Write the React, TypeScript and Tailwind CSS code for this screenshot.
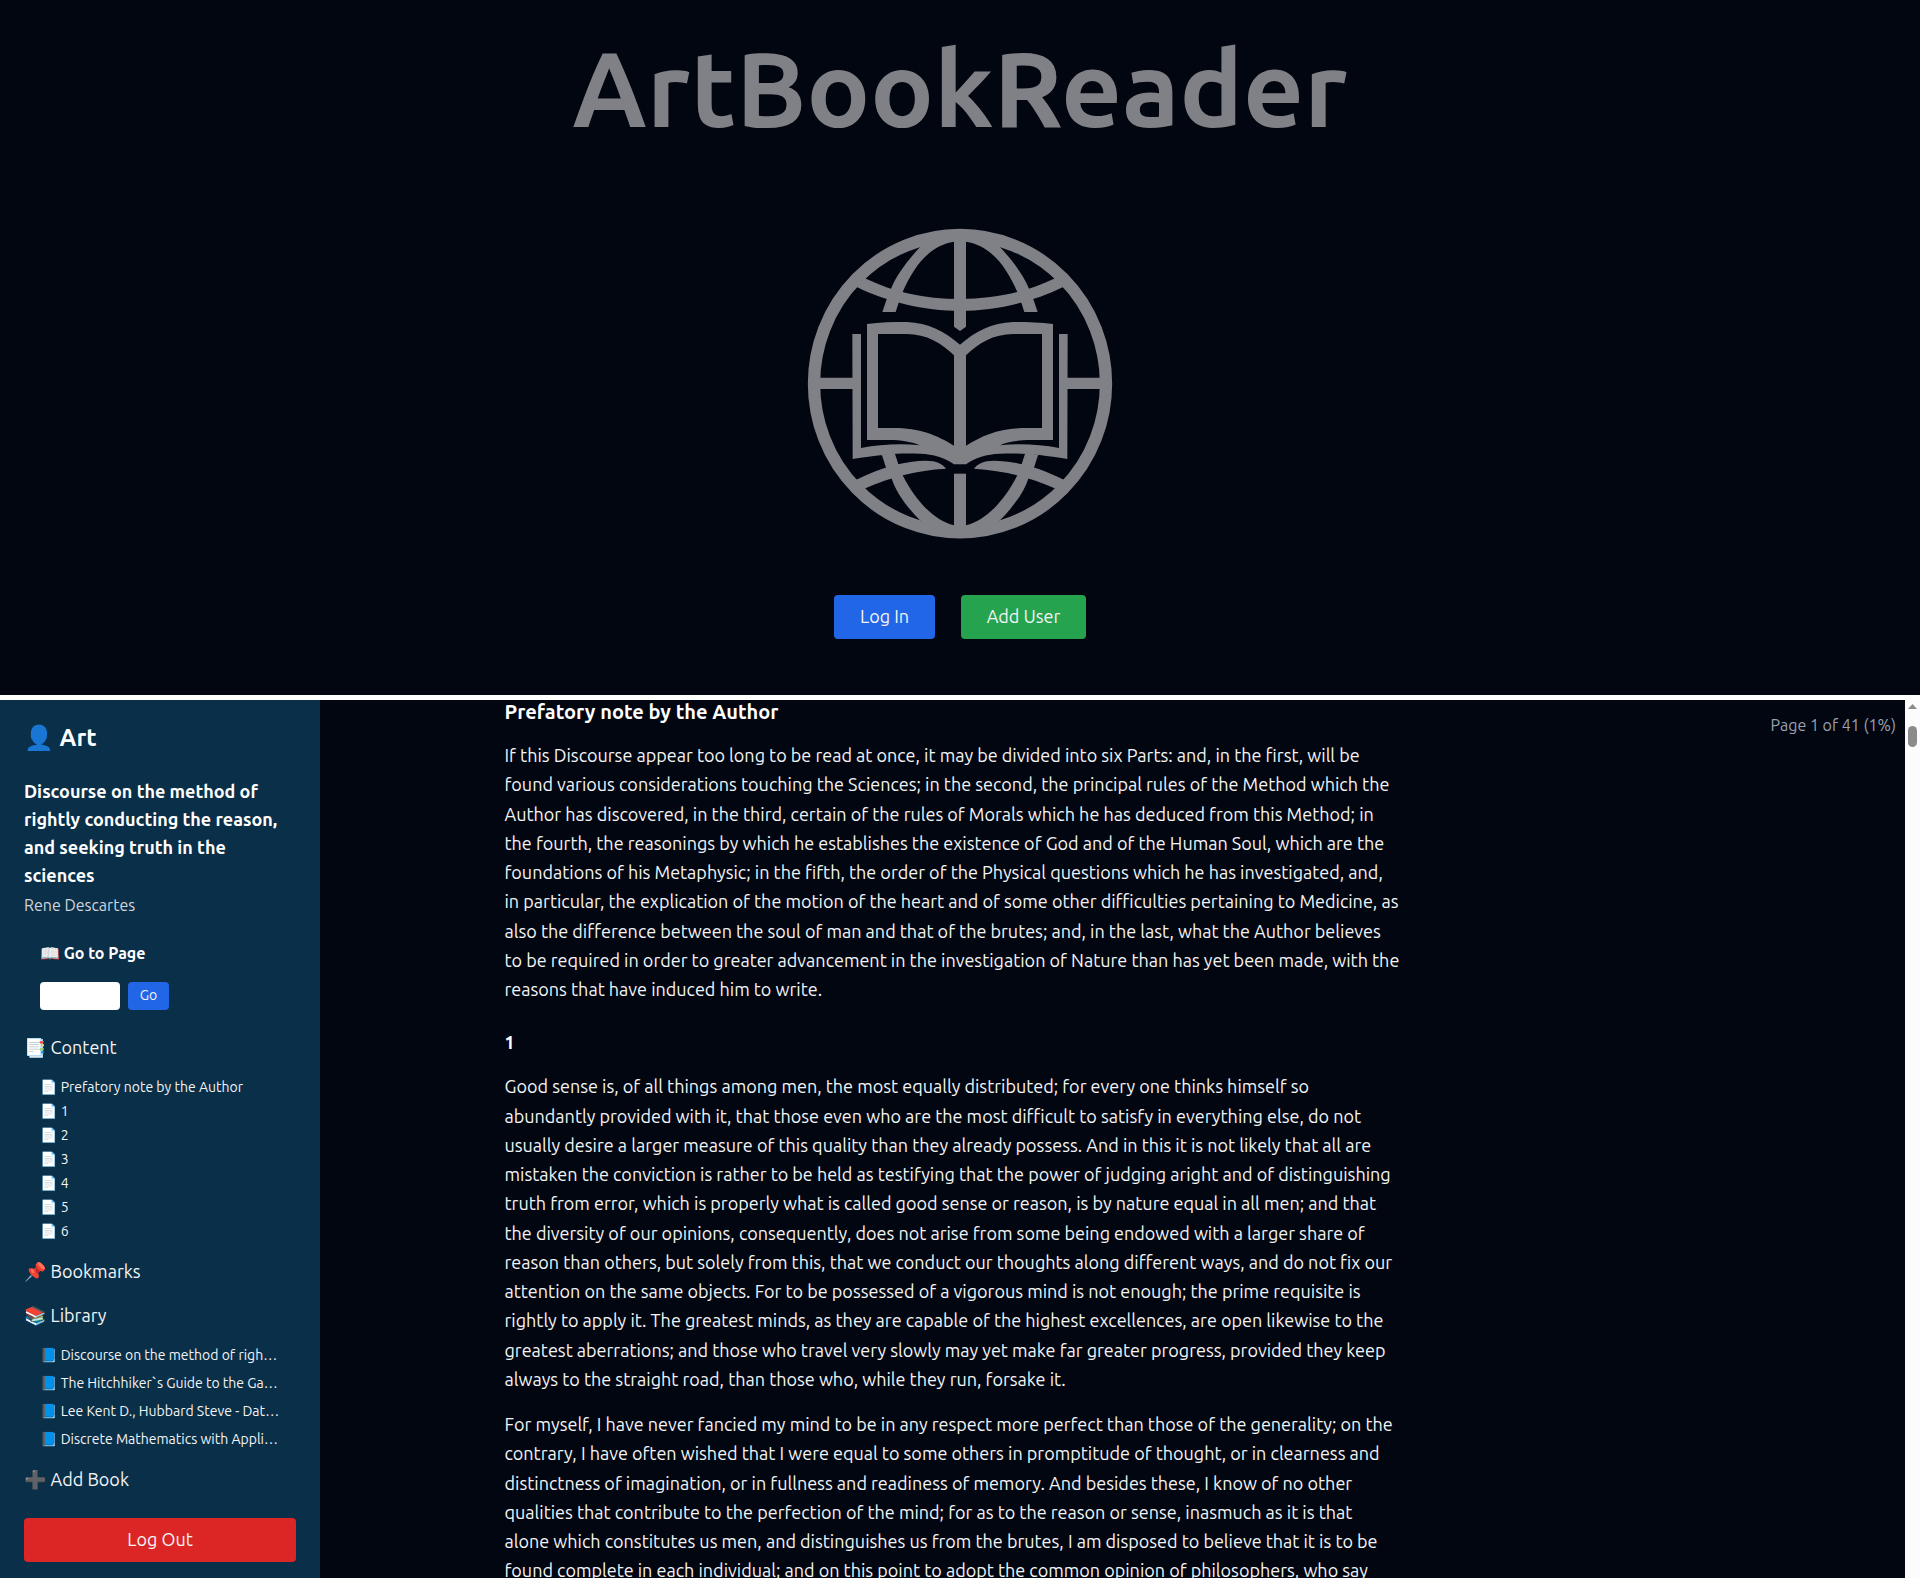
import React from "react";

const preface = [
  "If this Discourse appear too long to be read at once, it may be divided into six Parts: and, in the first, will be",
  "found various considerations touching the Sciences; in the second, the principal rules of the Method which the",
  "Author has discovered, in the third, certain of the rules of Morals which he has deduced from this Method; in",
  "the fourth, the reasonings by which he establishes the existence of God and of the Human Soul, which are the",
  "foundations of his Metaphysic; in the fifth, the order of the Physical questions which he has investigated, and,",
  "in particular, the explication of the motion of the heart and of some other difficulties pertaining to Medicine, as",
  "also the difference between the soul of man and that of the brutes; and, in the last, what the Author believes",
  "to be required in order to greater advancement in the investigation of Nature than has yet been made, with the",
  "reasons that have induced him to write.",
];

const goodSense = [
  "Good sense is, of all things among men, the most equally distributed; for every one thinks himself so",
  "abundantly provided with it, that those even who are the most difficult to satisfy in everything else, do not",
  "usually desire a larger measure of this quality than they already possess. And in this it is not likely that all are",
  "mistaken the conviction is rather to be held as testifying that the power of judging aright and of distinguishing",
  "truth from error, which is properly what is called good sense or reason, is by nature equal in all men; and that",
  "the diversity of our opinions, consequently, does not arise from some being endowed with a larger share of",
  "reason than others, but solely from this, that we conduct our thoughts along different ways, and do not fix our",
  "attention on the same objects. For to be possessed of a vigorous mind is not enough; the prime requisite is",
  "rightly to apply it. The greatest minds, as they are capable of the highest excellences, are open likewise to the",
  "greatest aberrations; and those who travel very slowly may yet make far greater progress, provided they keep",
  "always to the straight road, than those who, while they run, forsake it.",
];

const myself = [
  "For myself, I have never fancied my mind to be in any respect more perfect than those of the generality; on the",
  "contrary, I have often wished that I were equal to some others in promptitude of thought, or in clearness and",
  "distinctness of imagination, or in fullness and readiness of memory. And besides these, I know of no other",
  "qualities that contribute to the perfection of the mind; for as to the reason or sense, inasmuch as it is that",
  "alone which constitutes us men, and distinguishes us from the brutes, I am disposed to believe that it is to be",
  "found complete in each individual; and on this point to adopt the common opinion of philosophers, who say",
];

const chapters = ["Prefatory note by the Author", "1", "2", "3", "4", "5", "6"];

const books = [
  "Discourse on the method of righ…",
  "The Hitchhiker`s Guide to the Ga…",
  "Lee Kent D., Hubbard Steve - Dat…",
  "Discrete Mathematics with Appli…",
];

function Paragraph({ lines }: { lines: string[] }) {
  return (
    <p className="mb-4 text-lg leading-relaxed whitespace-nowrap text-gray-100">
      {lines.map((line) => (
        <React.Fragment key={line}>
          {line}
          <br />
        </React.Fragment>
      ))}
    </p>
  );
}

function GlobeHalf() {
  return (
    <g>
      <path d="M390 111 C350 155 320 195 303 236 L290 268 L277 306 H317 L325 281 L338 246 C375 160 425 105 492 95 V70 L420 90 Z" />
      <path d="M190 190 L228 206 C310 245 400 267 512 267 V303 C400 303 290 275 202 232 L180 225 Z" />
      <path d="M85 503 H190 V537 H85 Z" />
      <path d="M185 815 L202 808 C270 772 350 752 408 752 C440 752 458 762 468 776 C380 781 300 802 228 834 L205 850 Z" />
      <path d="M275 734 C283 752 285 775 305 806 C320 850 350 890 390 931 L430 960 L492 968 V946 C430 930 375 870 338 796 L325 762 L314 729 Z" />
      <path
        fillRule="evenodd"
        d="M187 372 H213 V714 C270 703 335 700 390 706 C370 696 330 690 300 690 H231 V342 C270 337 310 336 350 336 C415 338 465 365 511 405 V763 H492 C465 742 430 733 390 731 C330 728 270 733 188 747 Z M264 372 H350 C410 372 455 400 492 436 V707 C440 675 390 654 310 654 H264 Z"
      />
    </g>
  );
}

function GlobeBook() {
  return (
    <svg viewBox="0 0 1020 1020" className="size-[340px] fill-[#808186]" aria-hidden="true">
      <ellipse cx="510" cy="521" rx="438" ry="446" fill="none" stroke="#808186" strokeWidth="37" />
      <GlobeHalf />
      <g transform="translate(1020 0) scale(-1 1)">
        <GlobeHalf />
      </g>
      <path d="M492 80 H528 V350 L510 363 L492 350 Z" />
      <path d="M492 791 H528 V960 H492 Z" />
    </svg>
  );
}

export default function App() {
  return (
    <div className="bg-white font-['Ubuntu','Noto_Sans','Noto_Color_Emoji',sans-serif] text-white">
      <header className="flex flex-col items-center bg-[#020611] pt-7 pb-14">
        <h1 className="text-[106px] leading-[120px] font-semibold text-[#808186]">ArtBookReader</h1>
        <div className="mt-[62px]">
          <GlobeBook />
        </div>
        <div className="mt-[45px] flex gap-[26px]">
          <button className="h-11 w-[101px] rounded bg-[#2266e8] pb-0.5 text-lg text-gray-100">Log In</button>
          <button className="h-11 w-[125px] rounded bg-[#26a34f] pb-0.5 text-lg text-gray-100">Add User</button>
        </div>
      </header>

      <div className="mt-[5px] flex bg-[#020611]">
        <aside className="w-80 shrink-0 bg-[#0a2f48] px-6 pt-[22px] pb-4">
          <h2 className="text-2xl font-semibold">👤 Art</h2>
          <h3 className="mt-[23px] text-lg leading-7 font-semibold whitespace-nowrap">
            Discourse on the method of
            <br />
            rightly conducting the reason,
            <br />
            and seeking truth in the
            <br />
            sciences
          </h3>
          <p className="mt-1 text-base text-gray-300">Rene Descartes</p>

          <form className="mt-6 pl-4" onSubmit={(e) => e.preventDefault()}>
            <label htmlFor="page" className="block text-base font-semibold">
              📖 Go to Page
            </label>
            <div className="mt-[17px] flex gap-2">
              <input id="page" type="text" className="h-7 w-20 rounded bg-white px-2 text-sm text-black" />
              <button type="submit" className="h-7 w-[41px] rounded bg-[#2266e8] pb-0.5 text-sm text-gray-100">
                Go
              </button>
            </div>
          </form>

          <nav className="flex flex-col text-gray-100">
            <button className="mt-[23px] text-left text-lg leading-7">📑 Content</button>
            <ul className="mt-3.5 pl-4 text-sm leading-6">
              {chapters.map((c) => (
                <li key={c}>
                  <a href="#chapter">📄 {c}</a>
                </li>
              ))}
            </ul>
            <button className="mt-3.5 text-left text-lg leading-7">📌 Bookmarks</button>
            <button className="mt-4 text-left text-lg leading-7">📚 Library</button>
            <ul className="mt-3 pl-4 text-sm leading-7 whitespace-nowrap">
              {books.map((b) => (
                <li key={b}>
                  <a href="#book">📘 {b}</a>
                </li>
              ))}
            </ul>
            <button className="mt-3 text-left text-lg leading-7">➕ Add Book</button>
          </nav>
          <button className="mt-[25px] h-11 w-full rounded bg-[#dc2626] pb-0.5 text-lg text-gray-100">Log Out</button>
        </aside>

        <main className="relative min-w-0 flex-1 overflow-hidden pr-80 contain-size">
          <article className="mx-auto max-w-4xl">
            <h2 className="mb-[17px] text-xl leading-6 font-semibold">Prefatory note by the Author</h2>
            <Paragraph lines={preface} />
            <h2 className="mt-6 mb-4 text-lg leading-7 font-semibold">1</h2>
            <Paragraph lines={goodSense} />
            <Paragraph lines={myself} />
          </article>
          <div className="absolute top-[13px] right-[9px] text-base text-gray-400">Page 1 of 41 (1%)</div>
        </main>

        <div className="flex w-[15px] shrink-0 flex-col items-center bg-[#fcfcfc] pt-1">
          <svg viewBox="0 0 9 5" className="h-[5px] w-[9px] fill-[#8b8b8b]" aria-hidden="true">
            <path d="M0 5 L4.5 0 L9 5 Z" />
          </svg>
          <div className="mt-[17px] h-[21px] w-[9px] rounded-full bg-[#8b8b8b]" />
        </div>
      </div>
    </div>
  );
}
